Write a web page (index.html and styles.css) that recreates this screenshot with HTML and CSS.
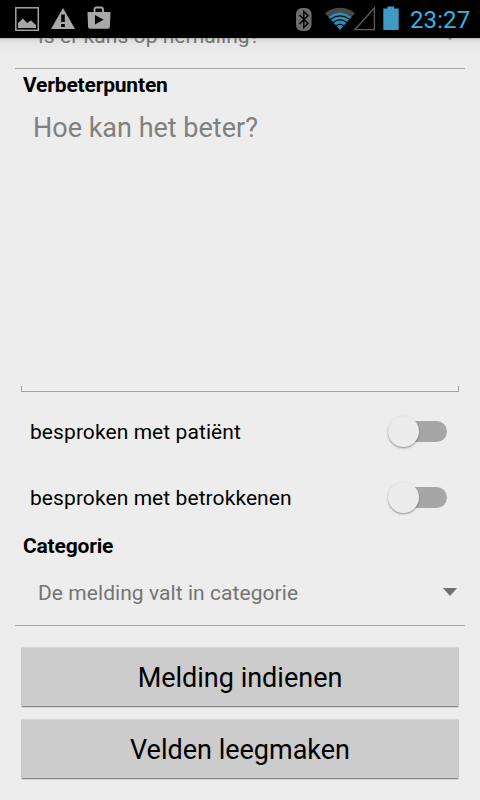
FILE: index.html
```html
<!DOCTYPE html>
<html lang="nl">
<head>
<meta charset="utf-8">
<title>Melding</title>
<link rel="stylesheet" href="styles.css">
</head>
<body>
<header class="status">
  <svg class="status-icons" width="120" height="38" viewBox="0 0 120 38">
    <rect x="15.8" y="7.8" width="22.500" height="22.500" fill="none" stroke="#a3a6a4" stroke-width="1.500"/>
    <path d="M18 28V23L23 18.5L27 23L31 20.5L36 25V28Z" fill="#a3a6a4"/>
    <path d="M63 8L75 29H51Z" fill="#a8a8a8"/>
    <path d="M61.2 14.5h3.6v7.5h-3.6zM61.2 24h3.6v3h-3.6z" fill="#000"/>
    <path d="M94.5 13V9.5Q94.5 7.5 96.5 7.5H101Q103 7.5 103 9.5V13" fill="none" stroke="#a8a8a8" stroke-width="1.8"/>
    <path d="M87.5 12H110.5L109.9 27Q109.8 28.7 108 28.700H90Q88.200 28.700 88.100 27Z" fill="#a8a8a8"/>
    <path d="M95 15L103.5 19.7L95 24.5Z" fill="#000"/>
  </svg>
  <svg class="status-icons" width="120" height="38" viewBox="290 0 120 38">
    <rect x="296" y="8" width="15.5" height="23" rx="6" fill="#6c6c6c"/>
    <path d="M299.5 15L308 23.5L303.8 27.5V11.5L308 15.5L299.5 24" fill="none" stroke="#000" stroke-width="1.4"/>
    <path d="M325 13Q340 2.5 355 13L351.5 17Q340 9 328.5 17Z" fill="#484848"/>
    <path d="M328.5 17Q340 8.5 351.5 17L340 30Z" fill="#2d8fbc"/>
    <path d="M330.5 19.2Q340 12.6 349.5 19.2M333 22.5Q340 17.3 347 22.5M336 26Q340 22.8 344 26" fill="none" stroke="#000" stroke-width="1.2"/>
    <path d="M374.4 8V29.7H354.8Z" fill="none" stroke="#5c5c5c" stroke-width="1.3"/>
    <path d="M383.3 8.5H387.5V6.5H394V8.5H398.7V30H383.3Z" fill="#3f9bc4"/>
  </svg>
  <span class="clock">23:27</span>
</header>
<main class="scroll">
  <div class="form">
    <div class="spinner"><span class="spinner-text">Is er kans op herhaling?</span><i class="arrow"></i></div>
    <h2 class="label">Verbeterpunten</h2>
    <div class="textarea"><span class="hint">Hoe kan het beter?</span></div>
    <div class="switch-row first"><span class="switch-text">besproken met patiënt</span><span class="switch"><i class="knob"></i></span></div>
    <div class="switch-row"><span class="switch-text">besproken met betrokkenen</span><span class="switch"><i class="knob"></i></span></div>
    <h2 class="label category">Categorie</h2>
    <div class="spinner last"><span class="spinner-text">De melding valt in categorie</span><i class="arrow"></i></div>
    <div class="buttons">
      <button class="btn">Melding indienen</button>
      <button class="btn">Velden leegmaken</button>
    </div>
  </div>
</main>
</body>
</html>
```
FILE: styles.css
```css
* { box-sizing: border-box; }
body {
  margin: 0;
  width: 480px;
  height: 800px;
  overflow: hidden;
  background: #ededed;
  color: #000;
  font: 21px/26px Roboto, sans-serif;
  white-space: nowrap;
}
.status {
  display: flex;
  height: 38px;
  background: #000;
}
.status-icons { display: block; flex: none; }
.status-icons + .status-icons { margin-left: 170px; }
.clock {
  color: #33b5e5;
  font-size: 24px;
  line-height: 40px;
  letter-spacing: 0.1px;
}
.scroll {
  height: 762px;
  overflow: hidden;
  background: linear-gradient(#b8b8b8, #dcdcdc 2px, #e5e5e5 5px, #ededed 15px);
}
.form { margin-top: -35px; padding: 0 15px; }
.spinner {
  display: flex;
  align-items: center;
  justify-content: space-between;
  height: 66px;
  padding: 0 8px 0 23px;
  border-bottom: 1px solid #a6a6a6;
}
.spinner-text { color: #747474; letter-spacing: 0.06px; }
.arrow {
  border: 7px solid transparent;
  border-top: 8px solid #707070;
  border-bottom: 0;
}
.spinner.last { height: 67px; }
.spinner.last .spinner-text { padding-top: 2px; }
.spinner.last .arrow { margin-bottom: 1px; }
.label {
  margin: 3px 8px 0;
  font-size: 21px;
  line-height: 26px;
  font-weight: 700;
  letter-spacing: -0.18px;
}
.textarea {
  height: 294px;
  margin: 0 6px;
  padding: 12px 12px 0;
  font-size: 27px;
  line-height: 36px;
  color: #808080;
  background:
    linear-gradient(#a3a3a3, #a3a3a3) left bottom / 1px 6px no-repeat,
    linear-gradient(#a3a3a3, #a3a3a3) right bottom / 1px 6px no-repeat,
    linear-gradient(#a3a3a3, #a3a3a3) left bottom / 100% 1px no-repeat;
}
.switch-row {
  display: flex;
  align-items: center;
  justify-content: space-between;
  height: 66px;
  padding: 0 18px 0 15px;
}
.switch-row.first { margin-top: 6px; }
.switch-text { padding-top: 2px; letter-spacing: 0.08px; }
.switch {
  display: flex;
  align-items: center;
  width: 54px;
  height: 21px;
  border-radius: 11px;
  background: #a6a6a6;
}
.knob {
  flex: none;
  width: 31px;
  height: 31px;
  margin-left: -5px;
  border-radius: 50%;
  background: #ececec;
  box-shadow: 0 1px 2px rgba(0, 0, 0, .4);
}
.label.category { margin-top: 3px; }
.buttons {
  display: grid;
  gap: 12px;
  padding: 21px 6px 0;
}
.btn {
  height: 60px;
  padding: 2px 0 0;
  border: 1px solid #c2c2c2;
  border-top-color: #d7d7d7;
  border-bottom-color: #858585;
  border-radius: 2px;
  background: #ccc;
  box-shadow: 0 1px 0 #d2d2d2;
  color: #000;
  font: 27px/36px Roboto, sans-serif;
}
```
